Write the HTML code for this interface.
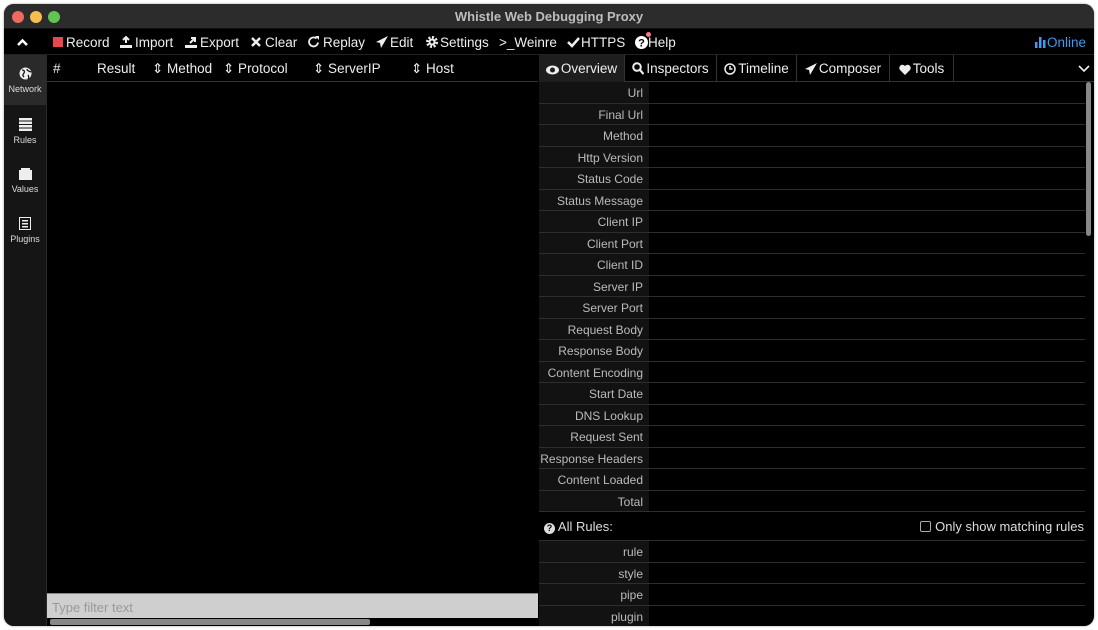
<!DOCTYPE html>
<html><head><meta charset="utf-8"><style>
*{margin:0;padding:0;box-sizing:border-box}
body{width:1098px;height:630px;background:#fff;font-family:"Liberation Sans",sans-serif;overflow:hidden;position:relative}
.win{position:absolute;left:4px;top:4px;width:1090px;height:622px;border-radius:10px;background:#000;overflow:hidden;box-shadow:0 0 2px rgba(0,0,0,.4)}
.title{position:absolute;left:0;top:0;width:100%;height:25px;background:#2c2c2c;color:#bdbdbd;font-weight:bold;font-size:13px;text-align:center;line-height:25px;border-bottom:1px solid #111}
.dot{position:absolute;top:7px;width:12px;height:12px;border-radius:50%}
.tb{position:absolute;left:0;top:25px;width:100%;height:26px;background:#000;color:#eee;font-size:13.5px;border-bottom:1px solid #222}
.tb span{position:absolute;top:6px;white-space:nowrap}
.tb svg{position:absolute;top:7px}
.side{position:absolute;left:0;top:51px;width:43px;height:571px;background:#151515;border-right:1px solid #2a2a2a}
.side div{position:absolute;left:0;width:42px;text-align:center;color:#ddd;font-size:9px}
.side svg{display:block;margin:0 auto 4px}
.hdr{position:absolute;left:43px;top:51px;width:491px;height:27px;border-bottom:1px solid #333;color:#eee;font-size:13.5px}
.hdr span{position:absolute;top:6px}
.filter{position:absolute;left:43px;top:589px;width:491px;height:25px;background:#cfcfcf;color:#999;font-size:13px;padding:6px 5px;border-top:1px solid #888}
.hs{position:absolute;left:46px;top:615px;width:320px;height:6px;background:#888;border-radius:2px}
.tabs{position:absolute;left:535px;top:51px;width:555px;height:27px;border-bottom:1px solid #333;color:#eee;font-size:13.5px}
.tab{position:absolute;top:0;height:27px;border-right:1px solid #333;padding-top:6px;text-align:center;white-space:nowrap}
.tab svg{vertical-align:-2px;margin-right:2px}
.rows{position:absolute;left:535px;top:78px;width:546px}
.r{height:21.5px;border-bottom:1px solid #2e2e2e;display:flex}
.r .l{width:110px;background:#121212;color:#bbb;font-size:12px;text-align:right;padding:4px 6px 0 0;white-space:nowrap}
.ar{height:29px;border-bottom:1px solid #2e2e2e;color:#ddd;font-size:13px;position:relative}
</style></head><body>
<div class="win">
 <div class="title">Whistle Web Debugging Proxy
  <div class="dot" style="left:8px;background:#ed6a5e"></div><div class="dot" style="left:26px;background:#f5bf4f"></div><div class="dot" style="left:44px;background:#61c554"></div>
 </div>
 <div class="tb">
  <svg style="left:13px;top:9px" width="11" height="8"><path d="M1 7L5.5 2.5L10 7" stroke="#fff" stroke-width="2.5" fill="none"/></svg>
  <svg style="left:49px;top:8px" width="10" height="10"><rect width="10" height="10" fill="#e8474b"/></svg><span style="left:62px">Record</span>
  <svg style="left:116px" width="12" height="12"><path d="M6 1v6M3 4l3-3 3 3" stroke="#eee" stroke-width="2" fill="none"/><rect x="0" y="9" width="12" height="3" fill="#eee"/></svg><span style="left:131px">Import</span>
  <svg style="left:181px" width="12" height="12"><path d="M5 7l5-5M6 2h4v4" stroke="#eee" stroke-width="2" fill="none"/><rect x="0" y="9" width="12" height="3" fill="#eee"/></svg><span style="left:196px">Export</span>
  <svg style="left:247px;top:8px" width="10" height="10"><path d="M1 1l8 8M9 1l-8 8" stroke="#eee" stroke-width="2.5"/></svg><span style="left:261px">Clear</span>
  <svg style="left:304px" width="12" height="12"><path d="M10 6.5A4.5 4.5 0 1 1 8.5 2.5" stroke="#eee" stroke-width="1.8" fill="none"/><path d="M7 0h4v4z" fill="#eee"/></svg><span style="left:319px">Replay</span>
  <svg style="left:372px" width="12" height="12"><path d="M12 0L0 6l4 1 1 5z" fill="#eee"/></svg><span style="left:386px">Edit</span>
  <svg style="left:422px" width="12" height="12"><circle cx="6" cy="6" r="4.5" fill="none" stroke="#eee" stroke-width="3" stroke-dasharray="2 1.5"/><circle cx="6" cy="6" r="3.5" fill="#eee"/><circle cx="6" cy="6" r="1.5" fill="#000"/></svg><span style="left:436px">Settings</span>
  <span style="left:495px">&gt;_Weinre</span>
  <svg style="left:563px" width="13" height="12"><path d="M1 6l4 4 7-8" stroke="#eee" stroke-width="2.5" fill="none"/></svg><span style="left:577px">HTTPS</span>
  <svg style="left:631px" width="13" height="13"><circle cx="6.5" cy="6.5" r="6.5" fill="#fff"/><text x="6.5" y="10.5" font-size="11" font-weight="bold" text-anchor="middle" fill="#000" font-family="Liberation Sans">?</text></svg><span style="left:644px">Help</span>
  <i style="position:absolute;left:642px;top:3px;width:5px;height:5px;border-radius:50%;background:#f07a87"></i>
  <svg style="left:1031px;top:8px" width="11" height="11"><rect x="0" y="5" width="2.5" height="6" fill="#3e9bf0"/><rect x="4" y="0" width="2.5" height="11" fill="#3e9bf0"/><rect x="8" y="3" width="2.5" height="8" fill="#3e9bf0"/></svg><span style="left:1043px;color:#3e9bf0">Online</span>
 </div>
 <div class="side">
  <div style="top:0;height:50px;background:#2a2a2a;padding-top:12px"><svg width="13" height="13"><circle cx="6.5" cy="6.5" r="6" fill="#eee"/><path d="M3 3c2 0 3 1 2 3s-2 2 0 4M8 2c0 2 2 2 4 3M9 8c1 1 1 3 0 4" stroke="#151515" stroke-width="1.3" fill="none"/></svg>Network</div>
  <div style="top:63px"><svg width="13" height="13"><rect y="0" width="13" height="2.5" fill="#eee"/><rect y="3.5" width="13" height="2.5" fill="#eee"/><rect y="7" width="13" height="2.5" fill="#eee"/><rect y="10.5" width="13" height="2.5" fill="#eee"/></svg>Rules</div>
  <div style="top:113px"><svg width="13" height="12"><rect y="2" width="13" height="10" fill="#eee"/><rect x="2" y="0" width="9" height="2" fill="#eee"/></svg>Values</div>
  <div style="top:162px"><svg width="12" height="13"><rect x=".5" y=".5" width="11" height="12" fill="none" stroke="#eee"/><rect x="3" y="3" width="6" height="1.5" fill="#eee"/><rect x="3" y="6" width="6" height="1.5" fill="#eee"/><rect x="3" y="9" width="6" height="1.5" fill="#eee"/></svg>Plugins</div>
 </div>
 <div class="hdr">
  <span style="left:6px">#</span><span style="left:50px">Result</span><span style="left:105px">⇕ Method</span><span style="left:176px">⇕ Protocol</span><span style="left:266px">⇕ ServerIP</span><span style="left:364px">⇕ Host</span>
 </div>
 <div class="filter">Type filter text</div>
 <div class="hs"></div>
 <div class="tabs">
  <div class="tab" style="left:0;width:86px;background:#1e1e1e"><svg width="13" height="10"><ellipse cx="6.5" cy="5" rx="6.5" ry="4.5" fill="#eee"/><circle cx="6.5" cy="5" r="2.5" fill="#1e1e1e"/></svg>Overview</div>
  <div class="tab" style="left:86px;width:92px"><svg width="12" height="13"><circle cx="5" cy="5" r="3.8" stroke="#eee" stroke-width="2" fill="none"/><path d="M8 8l3.5 4" stroke="#eee" stroke-width="2.2"/></svg>Inspectors</div>
  <div class="tab" style="left:178px;width:80px"><svg width="12" height="12"><circle cx="6" cy="6" r="5" stroke="#eee" stroke-width="1.5" fill="none"/><path d="M6 3v3h2.5" stroke="#eee" stroke-width="1.5" fill="none"/></svg>Timeline</div>
  <div class="tab" style="left:258px;width:93px"><svg width="12" height="12"><path d="M12 0L0 6l4 1 1 5z" fill="#eee"/></svg>Composer</div>
  <div class="tab" style="left:351px;width:64px"><svg width="12" height="11"><path d="M6 11L1 6A3 3 0 0 1 6 2A3 3 0 0 1 11 6z" fill="#eee"/></svg>Tools</div>
  <svg style="position:absolute;right:4px;top:10px" width="12" height="8"><path d="M1 1l5 5 5-5" stroke="#eee" stroke-width="1.6" fill="none"/></svg>
 </div>
 <div class="rows">
  <div class="r"><div class="l">Url</div></div>
  <div class="r"><div class="l">Final Url</div></div>
  <div class="r"><div class="l">Method</div></div>
  <div class="r"><div class="l">Http Version</div></div>
  <div class="r"><div class="l">Status Code</div></div>
  <div class="r"><div class="l">Status Message</div></div>
  <div class="r"><div class="l">Client IP</div></div>
  <div class="r"><div class="l">Client Port</div></div>
  <div class="r"><div class="l">Client ID</div></div>
  <div class="r"><div class="l">Server IP</div></div>
  <div class="r"><div class="l">Server Port</div></div>
  <div class="r"><div class="l">Request Body</div></div>
  <div class="r"><div class="l">Response Body</div></div>
  <div class="r"><div class="l">Content Encoding</div></div>
  <div class="r"><div class="l">Start Date</div></div>
  <div class="r"><div class="l">DNS Lookup</div></div>
  <div class="r"><div class="l">Request Sent</div></div>
  <div class="r"><div class="l">Response Headers</div></div>
  <div class="r"><div class="l">Content Loaded</div></div>
  <div class="r"><div class="l">Total</div></div>
  <div class="ar"><span style="position:absolute;left:5px;top:7px"><b style="display:inline-block;width:11px;height:11px;border-radius:50%;background:#ddd;color:#000;font-size:9px;text-align:center;line-height:11px">?</b> All Rules:</span><span style="position:absolute;right:1px;top:7px"><i style="display:inline-block;width:11px;height:11px;border:1px solid #aaa;border-radius:2px;vertical-align:-1px;margin-right:4px"></i>Only show matching rules</span></div>
  <div class="r"><div class="l">rule</div></div>
  <div class="r"><div class="l">style</div></div>
  <div class="r"><div class="l">pipe</div></div>
  <div class="r"><div class="l">plugin</div></div>
 </div>
 <div style="position:absolute;left:1082px;top:78px;width:5px;height:154px;background:#888;border-radius:3px"></div>
</div>
</body></html>
